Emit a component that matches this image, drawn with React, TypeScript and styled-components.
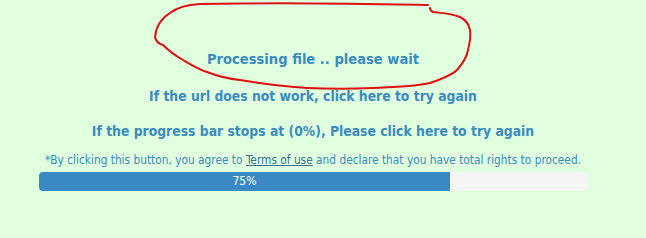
import React from "react";
import styled, { createGlobalStyle } from "styled-components";

const Global = createGlobalStyle`
  html, body { margin: 0; padding: 0; background: #dfffdf; }
  body { font-family: "DejaVu Sans Condensed", "DejaVu Sans", Verdana, sans-serif; font-stretch: semi-condensed; }
`;

const Page = styled.div`
  position: relative;
  width: 646px;
  height: 238px;
  display: flex;
  flex-direction: column;
  align-items: center;
  padding: 49px 20px 0 0;
  box-sizing: border-box;
`;

const Heading = styled.div<{ $mt?: number; $size?: number }>`
  color: #3c8ac2;
  font-weight: bold;
  font-size: ${(p) => p.$size ?? 13.8}px;
  line-height: 20px;
  margin-top: ${(p) => p.$mt ?? 0}px;
  white-space: nowrap;
  cursor: pointer;
`;

const Note = styled.div`
  color: #3c8ac2;
  font-size: 11.8px;
  line-height: 16px;
  margin-top: 11px;
  white-space: nowrap;
`;

const Link = styled.a`
  color: #3a6f96;
  text-decoration: underline;
`;

const Track = styled.div`
  width: 548px;
  height: 19px;
  margin-top: 4px;
  background: #f5f5f5;
  border-radius: 4px;
  overflow: hidden;
  display: flex;
`;

const Fill = styled.div`
  height: 100%;
  background: #3a89c5;
  color: #fff;
  font-size: 12px;
  line-height: 19px;
  text-align: center;
`;

const Scribble = styled.svg`
  position: absolute;
  left: 0;
  top: 0;
  pointer-events: none;
`;

export default function App() {
  const pct = 75;
  return (
    <>
      <Global />
      <Page>
        <Heading $size={14.6}>Processing file .. please wait</Heading>
        <Heading $mt={17}>If the url does not work, click here to try again</Heading>
        <Heading $mt={15}>If the progress bar stops at (0%), Please click here to try again</Heading>
        <Note>
          *By clicking this button, you agree to <Link>Terms of use</Link> and declare that you have total rights to proceed.
        </Note>
        <Track>
          <Fill style={{ width: `${pct}%` }}>{pct}%</Fill>
        </Track>
        <Scribble width="646" height="238" viewBox="0 0 646 238">
          <path
            d="M428 5 C380 4 300 2 200 4 C185 5 175 9 170 13 C162 18 156 26 155 37 C156 42 159 44 163 45 C170 52 176 56 183 60 C195 67 200 70 207 72 C220 77 230 79 240 80 C270 85 290 87 307 88 C330 89 350 89 373 88 C400 87 418 86 430 83 C445 78 452 75 457 70 C463 63 467 57 468 50 C470 42 471 36 470 30 C469 24 466 20 460 17 C450 13 440 13 433 12 C431 11 430 10 430 8"
            fill="none"
            stroke="#e01010"
            strokeWidth="2"
            strokeLinecap="round"
          />
        </Scribble>
      </Page>
    </>
  );
}
